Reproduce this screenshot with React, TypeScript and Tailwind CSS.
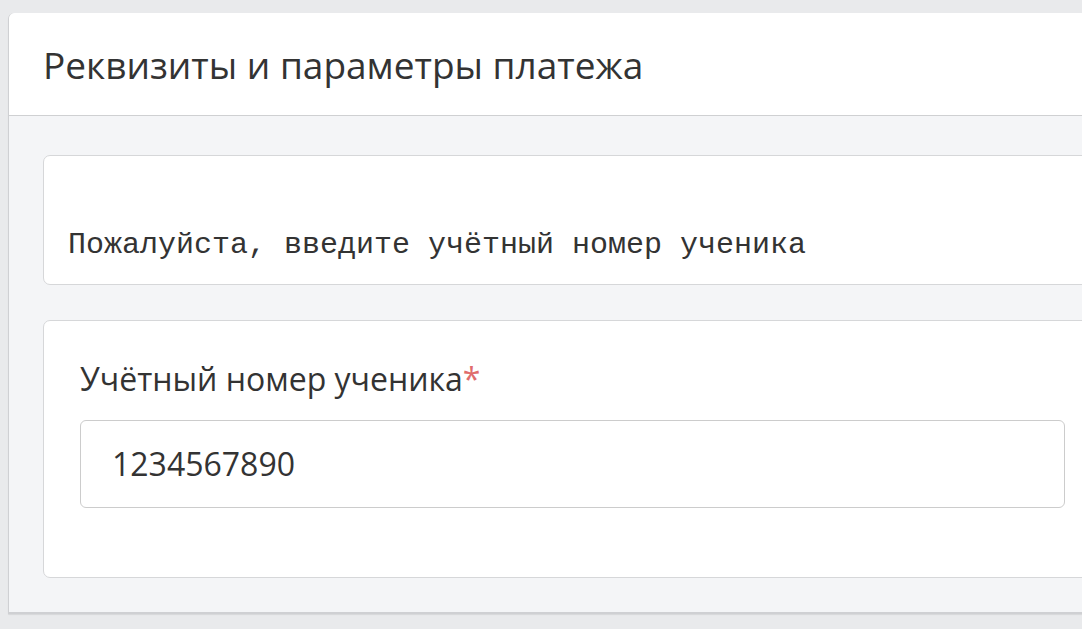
import React from "react";

export default function App() {
  return (
    <div className="w-[1082px] h-[629px] overflow-hidden bg-[#e9eaec] pt-[13px] pl-[8px]" style={{ fontFamily: '"Open Sans", sans-serif' }}>
      <div className="w-[1120px] rounded-tl-[6px] border-l border-b-2 border-[#cfd0d3] bg-[#f4f5f7] shadow-[0_1px_1px_rgba(0,0,0,0.08)]">
        <div className="h-[103px] rounded-tl-[6px] bg-white border-b border-[#cfd0d2] flex items-center pl-[34px]">
          <span className="text-[37px] text-[#333333] leading-none">Реквизиты и параметры платежа</span>
        </div>
        <div className="pt-[39px] pb-[34px] pl-[34px] flex flex-col gap-[35px]">
          <div className="h-[130px] rounded-[7px] border border-[#d6d7d9] bg-white pl-[24px] flex items-end pb-[24px]">
            <span className="text-[30px] text-[#333333] leading-none" style={{ fontFamily: '"Liberation Mono", monospace' }}>
              Пожалуйста, введите учётный номер ученика
            </span>
          </div>
          <div className="h-[258px] rounded-[7px] border border-[#d6d7d9] bg-white pl-[36px] pt-[42px]">
            <div className="text-[32px] text-[#333333] leading-none">
              Учётный номер ученика<span className="text-[#e06c6c]">*</span>
            </div>
            <div className="mt-[25px] w-[985px] h-[88px] rounded-[6px] border border-[#cccccc] flex items-center pl-[31px]">
              <span className="text-[32px] text-[#333333] leading-none">1234567890</span>
            </div>
          </div>
        </div>
      </div>
    </div>
  );
}
